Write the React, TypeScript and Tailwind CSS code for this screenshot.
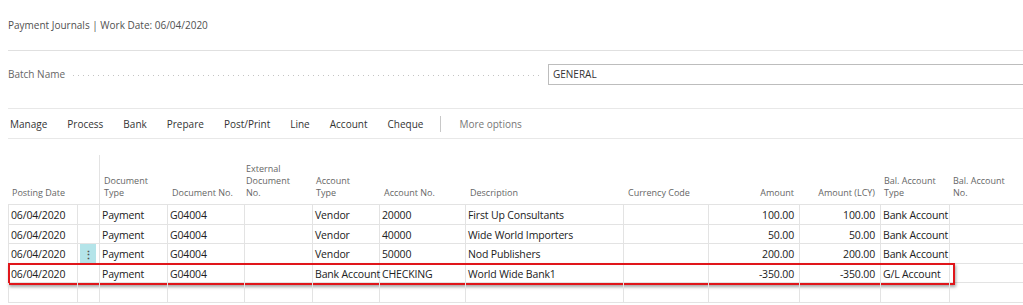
import React from "react";

type Row = {
  date: string;
  docType: string;
  docNo: string;
  extNo: string;
  accType: string;
  accNo: string;
  desc: string;
  currency: string;
  amount: string;
  amountLcy: string;
  balType: string;
  balNo: string;
  active?: boolean;
  marked?: boolean;
};

const rows: Row[] = [
  { date: "06/04/2020", docType: "Payment", docNo: "G04004", extNo: "", accType: "Vendor", accNo: "20000", desc: "First Up Consultants", currency: "", amount: "100.00", amountLcy: "100.00", balType: "Bank Account", balNo: "" },
  { date: "06/04/2020", docType: "Payment", docNo: "G04004", extNo: "", accType: "Vendor", accNo: "40000", desc: "Wide World Importers", currency: "", amount: "50.00", amountLcy: "50.00", balType: "Bank Account", balNo: "" },
  { date: "06/04/2020", docType: "Payment", docNo: "G04004", extNo: "", accType: "Vendor", accNo: "50000", desc: "Nod Publishers", currency: "", amount: "200.00", amountLcy: "200.00", balType: "Bank Account", balNo: "", active: true },
  { date: "06/04/2020", docType: "Payment", docNo: "G04004", extNo: "", accType: "Bank Account", accNo: "CHECKING", desc: "World Wide Bank1", currency: "", amount: "-350.00", amountLcy: "-350.00", balType: "G/L Account", balNo: "", marked: true },
];

const actions = ["Manage", "Process", "Bank", "Prepare", "Post/Print", "Line", "Account", "Cheque"];

const cols = "grid grid-cols-[69px_22px_68px_77px_68px_67px_86px_158px_85px_91px_81px_69px_1fr]";

const Cell: React.FC<{ children?: React.ReactNode; right?: boolean; className?: string }> = ({ children, right, className }) => (
  <div
    className={`border-r border-[#e3e3e3] pl-[2px] pr-[3px] whitespace-nowrap ${right ? "text-right pr-[5px]" : ""} ${className ?? ""}`}
  >
    {children}
  </div>
);

const Head: React.FC<{ children?: React.ReactNode; right?: boolean; className?: string }> = ({ children, right, className }) => (
  <div className={`flex items-end pb-[5px] px-[5px] leading-[12px] ${right ? "justify-end text-right" : ""} ${className ?? ""}`}>
    <span>{children}</span>
  </div>
);

export default function App() {
  return (
    <div className="w-[1023px] h-[305px] overflow-hidden bg-white font-['Open_Sans',sans-serif] text-[#212121]">
      <div className="pl-2 pt-[18px] h-[50px] text-[10px] text-[#505050]">
        Payment Journals | Work Date: 06/04/2020
      </div>
      <div className="ml-2 border-t border-[#e0e0e0]" />

      <div className="flex pl-2 pt-[13px] h-[57px] items-start">
        <div className="flex items-center h-[21px] w-full">
          <span className="text-[10px] text-[#666] pr-[8px]">Batch Name</span>
          <div className="flex-1 h-px mt-[2px] bg-[linear-gradient(to_right,#c4c4c4_1px,transparent_1px)] bg-[length:5px_1px] bg-repeat-x" />
          <div className="ml-[9px] mr-[-24px] w-[499px] shrink-0 h-[21px] border border-[#bdbdbd] pl-[4px] text-[10px] leading-[19px] text-[#333]">
            GENERAL
          </div>
        </div>
      </div>

      <div className="ml-2 border-t border-[#e8e8e8] h-[31px] pt-px flex items-center text-[10px] text-[#333] border-b">
        <div className="flex items-center gap-[20px] pl-[2px]">
          {actions.map((a) => (
            <span key={a}>{a}</span>
          ))}
        </div>
        <div className="ml-[17px] h-[16px] border-l border-[#c8c8c8]" />
        <span className="ml-[18px] text-[#777]">More options</span>
      </div>

      <div className="ml-2 mt-[16px] text-[10px]">
        <div className={`${cols} h-[50px] text-[9px] text-[#666] border-b border-[#e3e3e3]`}>
          <Head className="pl-[4px]">Posting Date</Head>
          <Head />
          <Head className="border-l border-[#e3e3e3] pl-[4px]">Document<br />Type</Head>
          <Head>Document No.</Head>
          <Head className="pl-[2px]">External<br />Document<br />No.</Head>
          <Head className="pl-[4px]">Account<br />Type</Head>
          <Head>Account No.</Head>
          <Head>Description</Head>
          <Head>Currency Code</Head>
          <Head right>Amount</Head>
          <Head right>Amount (LCY)</Head>
          <Head className="pl-[4px]">Bal. Account<br />Type</Head>
          <Head className="pl-[4px]">Bal. Account<br />No.</Head>
        </div>

        {[...rows, null].map((r, i) => (
          <div key={i} className={`relative ${cols} h-[19.6px] leading-[20px] text-[10.5px] tracking-[-0.15px] border-b border-[#e3e3e3] border-l`}>
            <Cell>{r?.date}</Cell>
            <Cell className="px-0 pl-0 pr-0 flex items-center">
              {r?.active && (
                <div className="w-[17px] h-full bg-[#b4e4e9] flex items-center justify-center text-[#555] text-[11px] font-bold leading-none">
                  ⋮
                </div>
              )}
            </Cell>
            <Cell>{r?.docType}</Cell>
            <Cell>{r?.docNo}</Cell>
            <Cell>{r?.extNo}</Cell>
            <Cell>{r?.accType}</Cell>
            <Cell>{r?.accNo}</Cell>
            <Cell>{r?.desc}</Cell>
            <Cell>{r?.currency}</Cell>
            <Cell right>{r?.amount}</Cell>
            <Cell right>{r?.amountLcy}</Cell>
            <Cell>{r?.balType}</Cell>
            <Cell className="border-r-0">{r?.balNo}</Cell>
            {r?.marked && (
              <div className="absolute left-[-1px] top-[-1px] w-[947px] h-[22px] border-2 border-[#e0161b] shadow-[1px_2px_3px_rgba(0,0,0,0.35)] pointer-events-none" />
            )}
          </div>
        ))}
      </div>
    </div>
  );
}
